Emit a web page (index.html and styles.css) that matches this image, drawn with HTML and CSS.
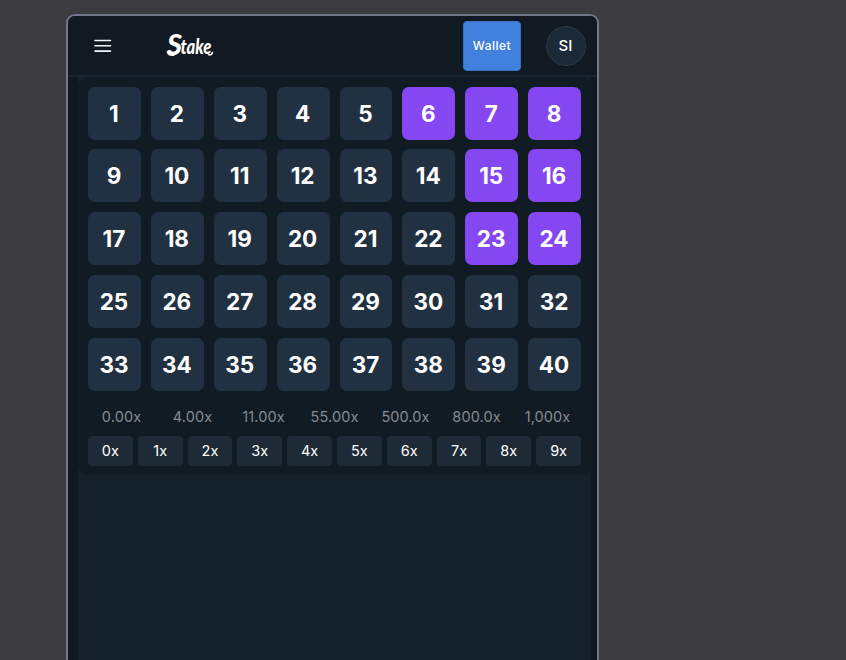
FILE: index.html
```html
<!DOCTYPE html>
<html lang="en">
<head>
<meta charset="utf-8">
<title>Stake</title>
<link rel="stylesheet" href="styles.css">
</head>
<body>
<div class="frame">
  <header class="header">
    <button class="menu" aria-label="Menu"><svg width="18" height="14" viewBox="0 0 18 14"><path d="M1 1.5h15.5M1 6.8h15.5M1 12.1h15.5" stroke="#f2f6f8" stroke-width="1.6" stroke-linecap="round"/></svg></button>
    <svg class="logo" width="60" height="50" viewBox="-5 -10 60 50">
      <text class="initial" x="1" y="24" textLength="15" lengthAdjust="spacingAndGlyphs">S</text>
      <text class="rest" x="14.5" y="23" textLength="31" lengthAdjust="spacingAndGlyphs">take</text>
      <path d="M1.5 20.5C1.5 23 4 25 8 24M42.5 23.5C44.5 24.5 46 23.5 46.5 21.5" fill="none" stroke="#fff" stroke-width="1.6" stroke-linecap="round"/>
    </svg>
    <button class="wallet">Wallet</button>
    <div class="avatar">SI</div>
  </header>
  <main class="content">
    <section class="panel">
      <div class="board" id="board"></div>
      <div class="payouts" id="payouts"></div>
      <div class="hits" id="hits"></div>
    </section>
  </main>
</div>
<script src="script.js"></script>
</body>
</html>
```
FILE: styles.css
```css
* { box-sizing: border-box; }
html, body { height: 100%; }
body { margin: 0; overflow: hidden; background: #3b3b40; font-family: Inter, sans-serif; color: #fff; padding: 14px 0 0 66px; }
button { border: 0; padding: 0; color: inherit; font: inherit; background: none; }
.frame { width: 533px; height: 100%; display: flex; flex-direction: column; border: 2px solid #717789; border-bottom: 0; border-radius: 9px 9px 0 0; background: #14171f; overflow: hidden; }
.header { flex: none; height: 61px; display: flex; align-items: center; background: #111a22; border-bottom: 2px solid #172330; padding: 0 11.5px 0 26px; }
.menu { width: 18px; height: 14px; display: flex; }
.logo { margin-left: 49px; overflow: visible; font-family: Lato, sans-serif; font-style: italic; font-weight: 900; fill: #fff; }
.initial { font-size: 28px; }
.rest { font-size: 21px; }
.wallet { width: 58px; height: 50px; margin-left: auto; border-radius: 4px; background: #4180dc; border: 1px solid #3971c1; font-size: 12px; font-weight: 500; letter-spacing: 0.5px; }
.avatar { width: 40px; height: 40px; margin-left: 24.5px; border-radius: 50%; background: #1c2937; border: 1px solid #2a3947; display: flex; align-items: center; justify-content: center; font-size: 15px; font-weight: 500; }
.content { flex: 1; margin: 0 6px 0 10px; background: #14212b; }
.panel { height: 398px; padding: 9.5px 10px 0; background: #111b23; border-radius: 10px; }
.board { display: grid; grid-template-columns: repeat(8, 1fr); grid-auto-rows: 53px; gap: 9.9px 10px; }
.cell { display: flex; align-items: center; justify-content: center; padding: 0 1px 0 0; border-radius: 7px; background: #213142; font-size: 22.5px; font-weight: 650; }
.picked { background: #8447f2; }
.payouts { display: grid; grid-template-columns: repeat(7, 1fr); margin: 16px -2px 0; height: 20px; line-height: 20px; color: #858b93; font-size: 14.5px; letter-spacing: 0.1px; text-align: center; }
.hits { display: grid; grid-template-columns: repeat(10, 1fr); gap: 5px; margin-top: 9px; }
.hit { height: 30px; line-height: 30px; border-radius: 4px; background: #1e2a36; text-align: center; font-size: 14.5px; }
```
FILE: script.js
```js
const picked = new Set([6, 7, 8, 15, 16, 23, 24]);

function fill(id, items, className) {
  document.getElementById(id).innerHTML = items
    .map(item => `<div class="${className(item)}">${item}</div>`).join('');
}

fill('board', Array.from({ length: 40 }, (_, i) => i + 1), n => picked.has(n) ? 'cell picked' : 'cell');
fill('payouts', ['0.00x', '4.00x', '11.00x', '55.00x', '500.0x', '800.0x', '1,000x'], () => 'payout');
fill('hits', Array.from({ length: 10 }, (_, i) => i + 'x'), () => 'hit');
```
